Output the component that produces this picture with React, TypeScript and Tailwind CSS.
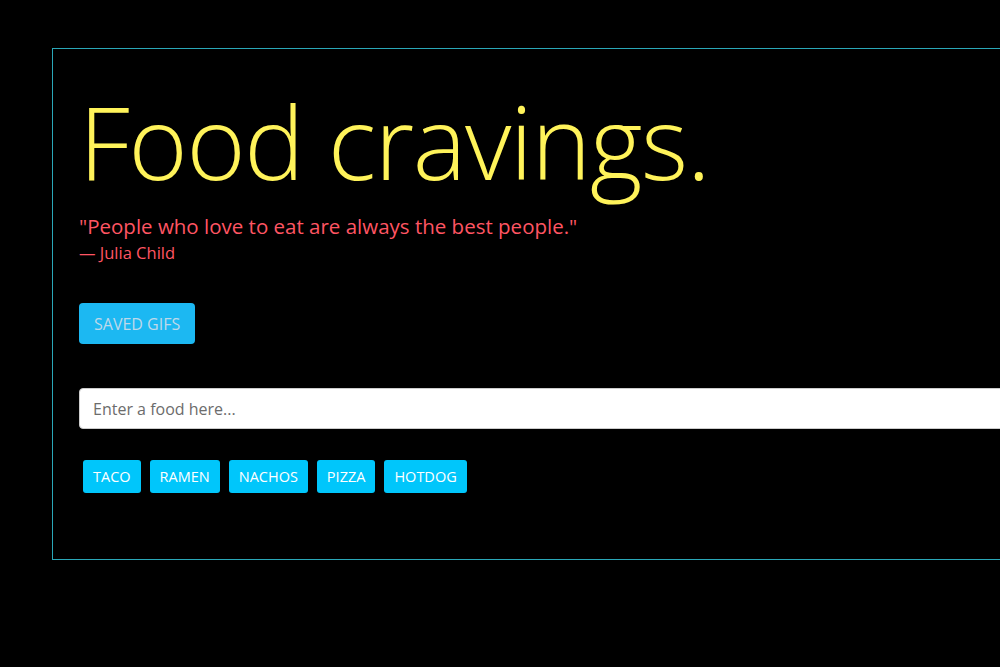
export default function App() {
  const foods = ["TACO", "RAMEN", "NACHOS", "PIZZA", "HOTDOG"];

  return (
    <div className="w-[1000px] h-[667px] overflow-hidden bg-black" style={{ fontFamily: '"Open Sans", "Noto Sans", sans-serif' }}>
      <div className="pt-[48px] pl-[52px]">
        <div className="w-[1100px] h-[512px] border border-[#2aa7b8] pl-[26px] pr-6">
          <h1 className="mt-[32px] text-[101px] leading-[120px] font-light text-[#fff35a] tracking-[-1.3px]">
            Food cravings.
          </h1>
          <p className="mt-[12px] text-[20.5px] leading-[26px] text-[#ff5563]">
            "People who love to eat are always the best people."
          </p>
          <p className="mt-[2px] text-[16.5px] leading-[24px] text-[#ff5563]">— Julia Child</p>

          <button className="mt-[38px] h-[41px] px-[15px] rounded-[4px] bg-[#1cb8f2] text-[#bfd9ea] text-[16px]">
            SAVED GIFS
          </button>

          <input
            type="text"
            placeholder="Enter a food here..."
            className="mt-[44px] block w-full h-[41px] rounded-[4px] bg-white border border-[#ccc] px-[13px] text-[16px] text-[#555] placeholder:text-[#6c6c6c] outline-none"
          />

          <div className="mt-[31px] flex gap-[9px] pl-[4px]">
            {foods.map((f) => (
              <button
                key={f}
                className="h-[33px] px-[10px] rounded-[3px] bg-[#00c6fb] text-white text-[14.5px]"
              >
                {f}
              </button>
            ))}
          </div>
        </div>
      </div>
    </div>
  );
}
